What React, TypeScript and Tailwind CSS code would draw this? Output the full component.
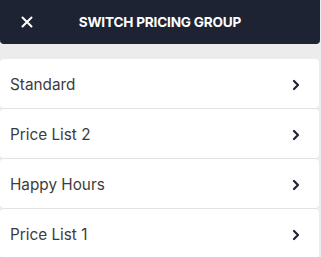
import React from "react";

const groups = ["Standard", "Price List 2", "Happy Hours", "Price List 1"];

const Chevron = () => (
  <svg width="10" height="12" viewBox="0 0 10 12" fill="none">
    <path d="M3 2l4 4-4 4" stroke="#1f2433" strokeWidth="2.2" strokeLinecap="round" strokeLinejoin="round" />
  </svg>
);

const App = () => {
  return (
    <div className="w-[321px] h-[257px] overflow-hidden bg-[#ececec] font-['Inter',sans-serif]">
      <div className="w-[320px] h-[44px] bg-[#1e2333] rounded-b-[4px] flex items-center relative">
        <svg className="absolute left-[21px] top-[16px]" width="12" height="12" viewBox="0 0 12 12">
          <path d="M1.5 1.5l9 9M10.5 1.5l-9 9" stroke="#fff" strokeWidth="2" strokeLinecap="round" />
        </svg>
        <h1 className="w-full text-center text-white text-[13.6px] font-bold tracking-[-0.2px]">
          SWITCH PRICING GROUP
        </h1>
      </div>
      <ul className="mt-[15px] w-[319px]">
        {groups.map((g) => (
          <li
            key={g}
            className="h-[50px] bg-white rounded-[4px] border-b border-[#e2e2e2] flex items-center justify-between pt-[3px] pl-[10px] pr-[18px]"
          >
            <span className="text-[15.3px] text-[#3c3c3c]">{g}</span>
            <Chevron />
          </li>
        ))}
      </ul>
    </div>
  );
};

export default App;
